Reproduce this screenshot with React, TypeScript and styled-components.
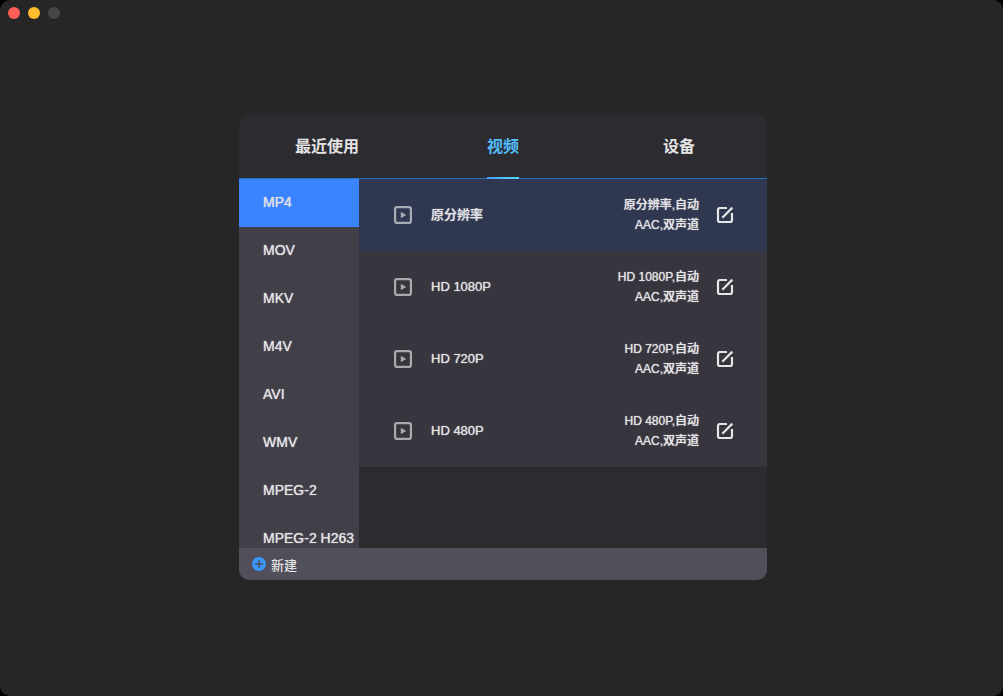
import React, { useState } from "react";
import styled, { createGlobalStyle } from "styled-components";

const GlobalStyle = createGlobalStyle`
  * { box-sizing: border-box; }
  body {
    margin: 0;
    background: #000;
    color: #e3e3e5;
    font-family: "Liberation Sans", "Noto Sans CJK SC", sans-serif;
    font-weight: 500;
    overflow: hidden;
  }
  button {
    margin: 0;
    padding: 0;
    border: 0;
    background: none;
    color: inherit;
    font: inherit;
    text-shadow: inherit;
    cursor: pointer;
  }
`;

const Window = styled.div`
  display: flex;
  flex-direction: column;
  min-height: 100vh;
  border-radius: 10px;
  background: #262626;
  overflow: hidden;
`;

const TitleBar = styled.header`
  display: flex;
  align-items: center;
  gap: 8px;
  height: 26px;
  padding-left: 8px;
`;

const WindowButton = styled.button<{ $color: string }>`
  width: 12px;
  height: 12px;
  border-radius: 50%;
  background: ${(p) => p.$color};
`;

const Main = styled.main`
  display: flex;
  flex: 1;
  justify-content: center;
  align-items: flex-start;
  padding: 89px 0 0 3px;
`;

const Panel = styled.section`
  width: 528px;
  max-width: 100%;
  border-radius: 10px;
  background: #2c2b30;
  overflow: hidden;
`;

const Tabs = styled.nav`
  display: grid;
  grid-template-columns: repeat(3, 1fr);
  justify-items: center;
  height: 64px;
  border-bottom: 1px solid #2272bd;
`;

const Tab = styled.button<{ $active: boolean }>`
  position: relative;
  height: 63px;
  padding-bottom: 4px;
  font-size: 16px;
  font-weight: 700;
  color: ${(p) => (p.$active ? "#53bdfb" : "#e3e3e3")};

  &::after {
    content: "";
    display: ${(p) => (p.$active ? "block" : "none")};
    position: absolute;
    left: 0;
    right: 0;
    bottom: -1px;
    height: 2px;
    background: linear-gradient(90deg, #429bff, #52def5);
  }
`;

const Content = styled.div`
  display: flex;
  height: 369px;
  text-shadow: 0 0 1px currentColor;
`;

const Formats = styled.div`
  width: 120px;
  background: #413f48;
  overflow: hidden;
`;

const Format = styled.button<{ $active: boolean }>`
  display: block;
  width: 100%;
  height: 48px;
  padding: 0 0 2px 24px;
  text-align: left;
  white-space: nowrap;
  font-size: 14px;
  background: ${(p) => (p.$active ? "#3b84ff" : "transparent")};
`;

const Presets = styled.ul`
  flex: 1;
  margin: 0;
  padding: 0;
  list-style: none;
`;

const Preset = styled.li<{ $active: boolean }>`
  display: flex;
  align-items: center;
  height: 72px;
  padding: 0 32px;
  background: ${(p) => (p.$active ? "#2f3850" : "#37353d")};
`;

const PresetName = styled.button`
  display: flex;
  flex: 1;
  align-items: center;
  gap: 16px;
  height: 72px;
  font-size: 13px;
  line-height: 20px;
`;

const Summary = styled.div`
  margin-right: 16px;
  text-align: right;
  font-size: 12px;
  line-height: 20px;
`;

const EditButton = styled.button`
  display: flex;
`;

const Footer = styled.footer`
  display: flex;
  align-items: center;
  height: 32px;
  padding-left: 12px;
  background: #514f5a;
`;

const NewButton = styled.button`
  display: flex;
  align-items: center;
  gap: 4px;
  font-size: 13px;
`;

const PlayIcon = () => (
  <svg width="24" height="24" viewBox="0 0 24 24" fill="none" opacity="0.65" aria-hidden="true">
    <rect x="4.1" y="4.1" width="15.8" height="15.8" rx="2" stroke="#e8eaec" strokeWidth="2.2" />
    <path d="M9.8 8.8v6.4L15.2 12z" fill="#e8eaec" />
  </svg>
);

const EditIcon = () => (
  <svg width="20" height="20" viewBox="0 0 20 20" fill="none" stroke="#e3e5e7" strokeWidth="2.2" aria-hidden="true">
    <path d="M12 3H5a2 2 0 0 0-2 2v10a2 2 0 0 0 2 2h10a2 2 0 0 0 2-2V8" />
    <path d="M7.3 12.7 17.4 2.6" />
  </svg>
);

const PlusIcon = () => (
  <svg width="16" height="16" viewBox="0 0 16 16" aria-hidden="true">
    <circle cx="8" cy="8" r="7" fill="#3d97fb" />
    <path d="M8 4v8M4 8h8" stroke="#4a4957" strokeWidth="1.4" />
  </svg>
);

const tabs = ["最近使用", "视频", "设备"];
const formats = ["MP4", "MOV", "MKV", "M4V", "AVI", "WMV", "MPEG-2", "MPEG-2 H263"];
const presets = ["原分辨率", "HD 1080P", "HD 720P", "HD 480P"];

export default function App() {
  const [tab, setTab] = useState("视频");
  const [format, setFormat] = useState("MP4");
  const [preset, setPreset] = useState("原分辨率");

  return (
    <>
      <GlobalStyle />
      <Window>
        <TitleBar>
          <WindowButton $color="#ff5f57" aria-label="关闭" />
          <WindowButton $color="#febc2e" aria-label="最小化" />
          <WindowButton $color="#464646" aria-label="缩放" disabled />
        </TitleBar>
        <Main>
          <Panel>
            <Tabs>
              {tabs.map((t) => (
                <Tab key={t} $active={t === tab} onClick={() => setTab(t)}>{t}</Tab>
              ))}
            </Tabs>
            <Content>
              <Formats>
                {formats.map((f) => (
                  <Format key={f} $active={f === format} onClick={() => setFormat(f)}>{f}</Format>
                ))}
              </Formats>
              <Presets>
                {presets.map((p) => (
                  <Preset key={p} $active={p === preset}>
                    <PresetName onClick={() => setPreset(p)}>
                      <PlayIcon />
                      {p}
                    </PresetName>
                    <Summary>
                      <div>{p},自动</div>
                      <div>AAC,双声道</div>
                    </Summary>
                    <EditButton aria-label={`编辑 ${p}`}>
                      <EditIcon />
                    </EditButton>
                  </Preset>
                ))}
              </Presets>
            </Content>
            <Footer>
              <NewButton>
                <PlusIcon />
                新建
              </NewButton>
            </Footer>
          </Panel>
        </Main>
      </Window>
    </>
  );
}
